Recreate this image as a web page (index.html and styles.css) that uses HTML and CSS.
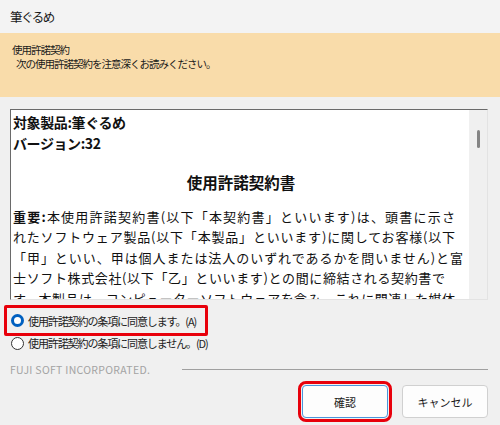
FILE: index.html
```
<!DOCTYPE html>
<html lang="ja">
<head>
    <meta charset="UTF-8">
    <title>筆ぐるめ</title>
    <link rel="stylesheet" href="styles.css">
</head>
<body>
    <div class="titlebar">筆ぐるめ</div>

    <!-- 見出し部分 -->
    <div class="banner">
        <div class="banner-title">使用許諾契約</div>
        <div class="banner-sub">次の使用許諾契約を注意深くお読みください。</div>
    </div>

    <!-- 契約書本文 -->
    <div class="license">
        <div class="license-text">
            <p class="bold label">対象製品:筆ぐるめ</p>
            <p class="bold label">バージョン:32</p>
            <p class="bold heading">使用許諾契約書</p>
            <p class="body"><span class="bold">重要:</span>本使用許諾契約書(以下「本契約書」といいます)は、頭書に示さ</p>
            <p class="body">れたソフトウェア製品(以下「本製品」といいます)に関してお客様(以下</p>
            <p class="body wide">「甲」といい、甲は個人または法人のいずれであるかを問いません)と富</p>
            <p class="body short">士ソフト株式会社(以下「乙」といいます)との間に締結される契約書で</p>
            <p class="body">す。本製品は、コンピューターソフトウェアを含み、これに関連した媒体</p>
        </div>
        <div class="scrollbar"><div class="thumb"></div></div>
    </div>

    <div class="choices">
        <label class="choice highlight">
            <span class="radio checked"></span>使用許諾契約の条項に同意します。(A)
        </label>
        <label class="choice">
            <span class="radio"></span>使用許諾契約の条項に同意しません。(D)
        </label>
    </div>

    <div class="brand">
        <span>FUJI SOFT INCORPORATED.</span>
        <div class="rule"></div>
    </div>

    <div class="buttons">
        <button class="btn primary">確認</button>
        <button class="btn">キャンセル</button>
    </div>
</body>
</html>
```

FILE: styles.css
```
body {
    margin: 0;
    width: 500px;
    height: 425px;
    overflow: hidden;
    background-color: #f0f0f0;
    font-family: 'Noto Sans CJK JP', 'Noto Sans', sans-serif;
    color: #1a1a1a;
}

.titlebar {
    height: 33px;
    line-height: 33px;
    padding-left: 10px;
    font-size: 12.5px;
    letter-spacing: -1.5px;
    background-color: #f3f3f3;
}

.banner {
    height: 64px;
    box-sizing: border-box;
    padding: 10px 12px 0;
    background-color: #f9dcaa;
    font-size: 10.5px;
    letter-spacing: -1px;
    line-height: 14px;
}

.banner-sub {
    padding-left: 4px;
}

.license {
    display: flex;
    margin: 12px 12px 0 10px;
    height: 191px;
    box-sizing: border-box;
    border-top: 1px solid #6a6a6a;
    border-left: 1px solid #6a6a6a;
    border-right: 1px solid #e3e3e3;
    border-bottom: 1px solid #e3e3e3;
    background-color: #fff;
}

.license-text {
    flex: 1;
    overflow: hidden;
    padding: 2px 0 0 2px;
    font-size: 14px;
    line-height: 21px;
    color: #111;
}

.license-text p {
    margin: 0;
    white-space: nowrap;
}

.license-text .label {
    letter-spacing: -0.4px;
}

.license-text .heading {
    margin: 17.5px 0 14px;
    text-align: center;
    font-size: 15.5px;
}

.license-text .body {
    width: 442px;
    font-size: 13px;
    line-height: 20.5px;
    text-align: justify;
    text-align-last: justify;
}

.license-text .wide {
    width: 450px;
}

.license-text .short {
    width: 432px;
}

.bold {
    font-weight: bold;
}

.scrollbar {
    width: 18px;
    flex-shrink: 0;
    background-color: #f0f0f0;
    display: flex;
    justify-content: center;
}

.thumb {
    width: 3px;
    height: 18px;
    margin-top: 20px;
    border-radius: 2px;
    background-color: #858585;
}

.choices {
    display: flex;
    flex-direction: column;
    margin-top: 5px;
    font-size: 11px;
    letter-spacing: -1.1px;
    line-height: 14px;
    color: #222;
}

.choice {
    display: flex;
    align-items: center;
    height: 22px;
    padding-left: 11px;
    white-space: nowrap;
}

.choice.highlight {
    box-sizing: border-box;
    width: 204px;
    height: 31px;
    margin-left: 4px;
    padding-left: 4px;
    border: 3px solid #e8000b;
    border-radius: 2px;
    margin-bottom: -4px;
}

.radio {
    width: 11px;
    height: 11px;
    border: 1px solid #333;
    border-radius: 50%;
    margin-right: 4px;
    background-color: #fff;
    flex-shrink: 0;
}

.radio.checked {
    width: 7px;
    height: 7px;
    border: 3px solid #0060c0;
}

.brand {
    display: flex;
    align-items: center;
    margin: 8px 12px 0 10px;
    height: 14px;
    font-size: 10.5px;
    color: #a3a3a3;
    letter-spacing: 0.3px;
}

.rule {
    flex: 1;
    height: 1px;
    margin-left: 32px;
    background-color: #a0a0a0;
}

.buttons {
    display: flex;
    justify-content: flex-end;
    gap: 14px;
    margin: 9px 12px 0 0;
}

.btn {
    width: 86px;
    height: 33px;
    padding: 0;
    font-family: 'Noto Sans CJK JP', sans-serif;
    font-size: 11px;
    color: #1a1a1a;
    background-color: #fdfdfd;
    border: 1px solid #d0d0d0;
    border-radius: 4px;
}

.btn.primary {
    border-color: #4a96dc;
    outline: 3px solid #e8000b;
    outline-offset: 1px;
}
```
